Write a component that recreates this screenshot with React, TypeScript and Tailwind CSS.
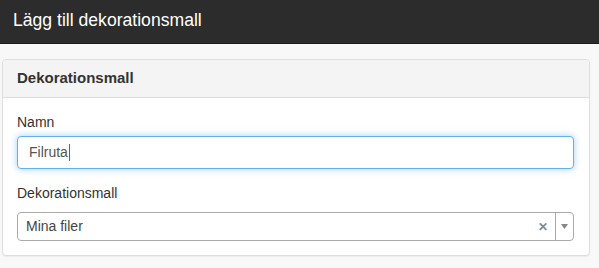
import React from "react";

export default function App() {
  return (
    <div className="w-[599px] h-[268px] bg-[#f8f8f8] overflow-hidden" style={{ fontFamily: '"Liberation Sans", Arial, sans-serif' }}>
      <div className="h-[44px] bg-[#2c2c2c] border-b border-[#1e1e1e] flex items-center pl-[13px]">
        <span className="text-white text-[17.6px] leading-none mt-[-2px]">Lägg till dekorationsmall</span>
      </div>
      <div className="mt-[15px] ml-[2px] w-[588px] bg-white border border-[#dedede] rounded-[4px] shadow-[0_1px_1px_rgba(0,0,0,0.05)]">
        <div className="h-[38px] bg-[#f4f4f4] border-b border-[#dedede] rounded-t-[4px] flex items-center pl-[14px]">
          <span className="text-[#333] text-[15px] font-bold">Dekorationsmall</span>
        </div>
        <div className="pl-[14px] pr-[14px] pt-[14px] pb-[14px]">
          <div className="text-[#333] text-[14px] leading-[20px]">Namn</div>
          <div className="mt-[4px] h-[33px] w-[557px] border border-[#66afe9] rounded-[4px] shadow-[0_0_7px_rgba(102,175,233,0.6)] bg-white flex items-center pl-[11px]">
            <span className="text-[#555] text-[14px]">Filruta</span>
            <span className="w-px h-[17px] bg-[#666] ml-[1px]" />
          </div>
          <div className="mt-[14px] text-[#333] text-[14px] leading-[20px]">Dekorationsmall</div>
          <div className="mt-[9px] h-[29px] w-[557px] border border-[#aaa] rounded-[4px] bg-white flex items-center">
            <span className="pl-[8px] flex-1 text-[#444] text-[14px]">Mina filer</span>
            <span className="text-[#888] text-[12px] font-bold leading-none mr-[7px]">✕</span>
            <div className="w-px h-full bg-[#aaa]" />
            <div className="w-[17px] flex items-center justify-center">
              <svg width="7" height="5" viewBox="0 0 7 5"><path d="M0 0 L7 0 L3.5 5 Z" fill="#888" /></svg>
            </div>
          </div>
        </div>
      </div>
    </div>
  );
}
